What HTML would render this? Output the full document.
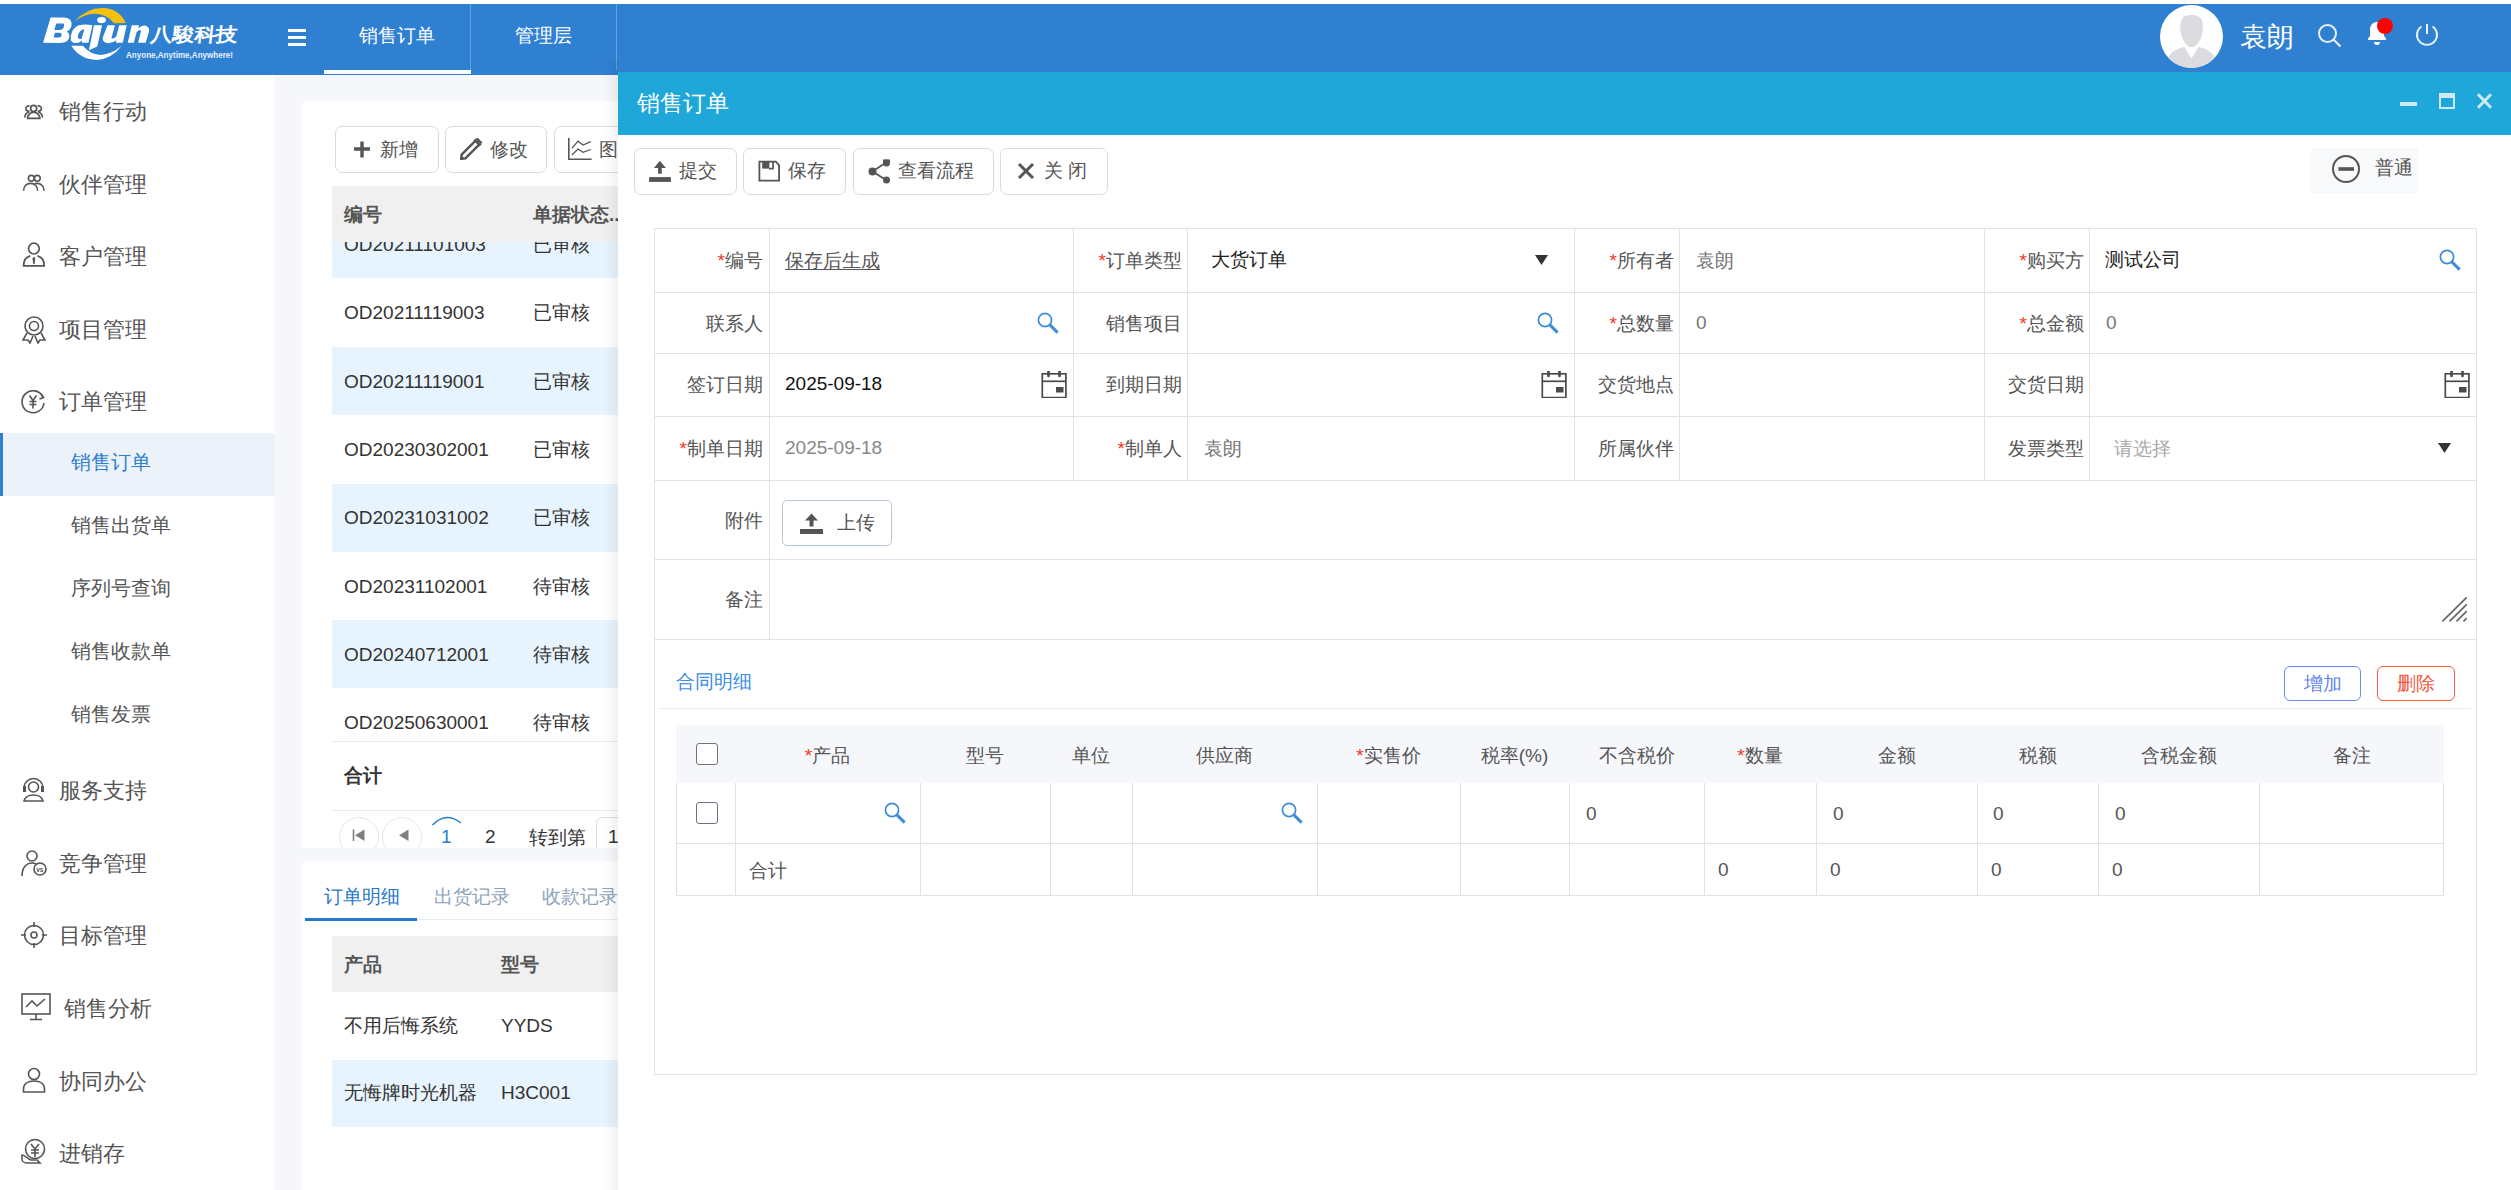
<!DOCTYPE html>
<html><head><meta charset="utf-8">
<style>
*{box-sizing:border-box;margin:0;padding:0}
html,body{width:2511px;height:1190px;overflow:hidden;background:#fff;font-family:"Liberation Sans",sans-serif;color:#333}
.t{position:absolute;white-space:nowrap}
.r{position:absolute}
</style></head><body>

<div class="r" style="left:275px;top:75px;width:2236px;height:1115px;background:#f5f7fb"></div>
<div class="r" style="left:301px;top:101px;width:2200px;height:747px;background:#fff;border-radius:6px 6px 0 0"></div>
<div class="r" style="left:301px;top:861px;width:2200px;height:400px;background:#fff;border-radius:6px"></div>
<div class="r" style="left:335px;top:126px;width:104px;height:47px;border:1px solid #dcdcdc;border-radius:7px;background:#fff"></div>
<div class="r" style="left:445px;top:126px;width:102px;height:47px;border:1px solid #dcdcdc;border-radius:7px;background:#fff"></div>
<div class="r" style="left:554px;top:126px;width:106px;height:47px;border:1px solid #dcdcdc;border-radius:7px;background:#fff"></div>
<svg class="r" style="left:353.5px;top:141px" width="16" height="17" viewBox="0 0 16 17"><path d="M8 0.5v16M0 8h16" stroke="#555" stroke-width="3.4" fill="none"/></svg>
<div class="t" style="left:380px;top:134.5px;font-size:19px;line-height:30px;color:#555;font-weight:normal;">新增</div>
<svg class="r" style="left:460px;top:138px" width="23" height="22" viewBox="0 0 23 22"><path d="M1.2 20.8 L1.6 16.6 L15.8 2.4 L19.6 6.2 L5.4 20.4 Z" fill="none" stroke="#555" stroke-width="2.4"/><path d="M0.5 21.5 L1 17 L5 21 Z" fill="#555"/><path d="M16 0.8 L17.5 -0.5 L22.5 4.5 L21 6 Z" fill="#555"/><path d="M14.5 1.5L20.5 7.5" stroke="#555" stroke-width="3"/></svg>
<div class="t" style="left:490px;top:134.5px;font-size:19px;line-height:30px;color:#555;font-weight:normal;">修改</div>
<svg class="r" style="left:568px;top:138px" width="24" height="23" viewBox="0 0 24 23"><path d="M0.8 0v21.2h22.8" stroke="#555" stroke-width="1.6" fill="none"/><path d="M3.9 10.4 L10 3.2 L15 7 L22.8 3.6 M3.9 17 L10 11 L15 14.3 L22.8 11.5" stroke="#555" stroke-width="1.3" fill="none"/></svg>
<div class="t" style="left:599px;top:134.5px;font-size:19px;line-height:30px;color:#555;font-weight:normal;">图表</div>
<div class="r" style="left:332px;top:186px;width:2100px;height:56px;background:#f0f0f0"></div>
<div class="r" style="left:332px;top:242px;width:2100px;height:499px;overflow:hidden">
<div class="r" style="left:0;top:-31.7px;width:2100px;height:68px;background:#e8f4fd"></div>
<div class="t" style="left:12px;top:-11.999999999999996px;font-size:19px;line-height:30px;color:#333">OD20211101003</div>
<div class="t" style="left:201px;top:-11.999999999999996px;font-size:19px;line-height:30px;color:#333">已审核</div>
<div class="r" style="left:0;top:36.6px;width:2100px;height:68px;background:#fff"></div>
<div class="t" style="left:12px;top:56.30000000000001px;font-size:19px;line-height:30px;color:#333">OD20211119003</div>
<div class="t" style="left:201px;top:56.30000000000001px;font-size:19px;line-height:30px;color:#333">已审核</div>
<div class="r" style="left:0;top:104.9px;width:2100px;height:68px;background:#e8f4fd"></div>
<div class="t" style="left:12px;top:124.60000000000002px;font-size:19px;line-height:30px;color:#333">OD20211119001</div>
<div class="t" style="left:201px;top:124.60000000000002px;font-size:19px;line-height:30px;color:#333">已审核</div>
<div class="r" style="left:0;top:173.2px;width:2100px;height:68px;background:#fff"></div>
<div class="t" style="left:12px;top:192.89999999999998px;font-size:19px;line-height:30px;color:#333">OD20230302001</div>
<div class="t" style="left:201px;top:192.89999999999998px;font-size:19px;line-height:30px;color:#333">已审核</div>
<div class="r" style="left:0;top:241.5px;width:2100px;height:68px;background:#e8f4fd"></div>
<div class="t" style="left:12px;top:261.2px;font-size:19px;line-height:30px;color:#333">OD20231031002</div>
<div class="t" style="left:201px;top:261.2px;font-size:19px;line-height:30px;color:#333">已审核</div>
<div class="r" style="left:0;top:309.8px;width:2100px;height:68px;background:#fff"></div>
<div class="t" style="left:12px;top:329.5px;font-size:19px;line-height:30px;color:#333">OD20231102001</div>
<div class="t" style="left:201px;top:329.5px;font-size:19px;line-height:30px;color:#333">待审核</div>
<div class="r" style="left:0;top:378.1px;width:2100px;height:68px;background:#e8f4fd"></div>
<div class="t" style="left:12px;top:397.8px;font-size:19px;line-height:30px;color:#333">OD20240712001</div>
<div class="t" style="left:201px;top:397.8px;font-size:19px;line-height:30px;color:#333">待审核</div>
<div class="r" style="left:0;top:446.4px;width:2100px;height:68px;background:#fff"></div>
<div class="t" style="left:12px;top:466.09999999999997px;font-size:19px;line-height:30px;color:#333">OD20250630001</div>
<div class="t" style="left:201px;top:466.09999999999997px;font-size:19px;line-height:30px;color:#333">待审核</div>
</div>
<div class="t" style="left:344px;top:200.0px;font-size:19px;line-height:30px;color:#555;font-weight:bold;">编号</div>
<div class="t" style="left:533px;top:200.0px;font-size:19px;line-height:30px;color:#555;font-weight:bold;">单据状态..</div>
<div class="r" style="left:332px;top:741px;width:2100px;height:1px;background:#e6ebf0"></div>
<div class="t" style="left:344px;top:761.0px;font-size:19px;line-height:30px;color:#333;font-weight:bold;">合计</div>
<div class="r" style="left:332px;top:810px;width:2100px;height:1px;background:#e6ebf0"></div>
<div class="r" style="left:301px;top:811px;width:400px;height:37px;overflow:hidden">
<div class="r" style="left:38px;top:6px;width:40px;height:40px;border:1px solid #e3e8f0;border-radius:50%"></div>
<div class="r" style="left:81px;top:6px;width:40px;height:40px;border:1px solid #e3e8f0;border-radius:50%"></div>
<svg class="r" style="left:51px;top:18px" width="14" height="14"><path d="M1.5 0.5v11.5" stroke="#808080" stroke-width="1.6"/><path d="M12.5 0.5v11.5L3 6.2z" fill="#808080"/></svg>
<svg class="r" style="left:97px;top:18px" width="14" height="14"><path d="M10.5 0.5v11.5L1 6.2z" fill="#808080"/></svg>
<svg class="r" style="left:130px;top:4px" width="32" height="12"><path d="M1.5 10 Q15 -4 30 8" stroke="#2a7fd0" stroke-width="1.5" fill="none"/></svg>
<div class="t" style="left:140px;top:11px;font-size:19px;line-height:30px;color:#2a7fd0">1</div>
<div class="t" style="left:184px;top:11px;font-size:19px;line-height:30px;color:#333">2</div>
<div class="t" style="left:228px;top:12px;font-size:19px;line-height:30px;color:#333">转到第</div>
<div class="r" style="left:295px;top:6px;width:60px;height:40px;border:1px solid #dcdcdc;border-radius:6px"></div>
<div class="t" style="left:307px;top:11px;font-size:19px;line-height:30px;color:#333">1</div>
</div>
<div class="t" style="left:324px;top:882.0px;font-size:19px;line-height:30px;color:#1f78c8;font-weight:normal;">订单明细</div>
<div class="t" style="left:434px;top:882.0px;font-size:19px;line-height:30px;color:#8ea3bb;font-weight:normal;">出货记录</div>
<div class="t" style="left:542px;top:882.0px;font-size:19px;line-height:30px;color:#8ea3bb;font-weight:normal;">收款记录</div>
<div class="r" style="left:305px;top:919px;width:2200px;height:1px;background:#e8edf3"></div>
<div class="r" style="left:305px;top:918px;width:112px;height:3px;background:#2477cc"></div>
<div class="r" style="left:332px;top:936px;width:2100px;height:56px;background:#f0f0f0"></div>
<div class="t" style="left:344px;top:950.0px;font-size:19px;line-height:30px;color:#555;font-weight:bold;">产品</div>
<div class="t" style="left:501px;top:950.0px;font-size:19px;line-height:30px;color:#555;font-weight:bold;">型号</div>
<div class="r" style="left:332px;top:1060px;width:2100px;height:67px;background:#e8f4fd"></div>
<div class="t" style="left:344px;top:1011.0px;font-size:19px;line-height:30px;color:#333;font-weight:normal;">不用后悔系统</div>
<div class="t" style="left:501px;top:1011.0px;font-size:19px;line-height:30px;color:#333;font-weight:normal;">YYDS</div>
<div class="t" style="left:344px;top:1078.0px;font-size:19px;line-height:30px;color:#333;font-weight:normal;">无悔牌时光机器</div>
<div class="t" style="left:501px;top:1078.0px;font-size:19px;line-height:30px;color:#333;font-weight:normal;">H3C001</div>
<div class="r" style="left:0px;top:75px;width:275px;height:1115px;background:#fff"></div>
<div class="r" style="left:0px;top:433px;width:275px;height:63px;background:#ecf2f9"></div>
<div class="r" style="left:0px;top:433px;width:3px;height:63px;background:#2f80d1"></div>
<div class="t" style="left:59px;top:93.5px;font-size:22px;line-height:35px;color:#555;font-weight:normal;">销售行动</div>
<div class="t" style="left:59px;top:167.0px;font-size:22px;line-height:35px;color:#555;font-weight:normal;">伙伴管理</div>
<div class="t" style="left:59px;top:239.0px;font-size:22px;line-height:35px;color:#555;font-weight:normal;">客户管理</div>
<div class="t" style="left:59px;top:312.0px;font-size:22px;line-height:35px;color:#555;font-weight:normal;">项目管理</div>
<div class="t" style="left:59px;top:384.0px;font-size:22px;line-height:35px;color:#555;font-weight:normal;">订单管理</div>
<div class="t" style="left:59px;top:772.5px;font-size:22px;line-height:35px;color:#555;font-weight:normal;">服务支持</div>
<div class="t" style="left:59px;top:845.5px;font-size:22px;line-height:35px;color:#555;font-weight:normal;">竞争管理</div>
<div class="t" style="left:59px;top:917.5px;font-size:22px;line-height:35px;color:#555;font-weight:normal;">目标管理</div>
<div class="t" style="left:63.5px;top:990.5px;font-size:22px;line-height:35px;color:#555;font-weight:normal;">销售分析</div>
<div class="t" style="left:59px;top:1063.5px;font-size:22px;line-height:35px;color:#555;font-weight:normal;">协同办公</div>
<div class="t" style="left:59px;top:1135.5px;font-size:22px;line-height:35px;color:#555;font-weight:normal;">进销存</div>
<div class="t" style="left:71px;top:446.0px;font-size:20px;line-height:32px;color:#2f7fd0;font-weight:normal;">销售订单</div>
<div class="t" style="left:71px;top:509.0px;font-size:20px;line-height:32px;color:#555;font-weight:normal;">销售出货单</div>
<div class="t" style="left:71px;top:572.0px;font-size:20px;line-height:32px;color:#555;font-weight:normal;">序列号查询</div>
<div class="t" style="left:71px;top:635.0px;font-size:20px;line-height:32px;color:#555;font-weight:normal;">销售收款单</div>
<div class="t" style="left:71px;top:698.0px;font-size:20px;line-height:32px;color:#555;font-weight:normal;">销售发票</div>
<svg class="r" style="left:22px;top:100px" width="24" height="22" viewBox="0 0 24 22"><g fill="none" stroke="#555" stroke-width="1.7"><circle cx="11.65" cy="8.4" r="3.05"/><path d="M5.6 18.35A6.1 6.1 0 0 1 17.8 18.35Z"/><path d="M7.55 6.2A2.6 2.6 0 1 0 7.4 11M2.8 17.5Q3.2 12.8 7.4 12"/><path d="M15.75 6.2A2.6 2.6 0 1 1 15.9 11M20.5 17.5Q20.1 12.8 15.9 12"/></g></svg>
<svg class="r" style="left:22px;top:173px" width="24" height="22" viewBox="0 0 24 22"><g fill="none" stroke="#555" stroke-width="1.6"><circle cx="9.3" cy="5.3" r="2.9"/><circle cx="15.3" cy="5.3" r="2.9"/><path d="M1.6 17.8C1.6 13 4.6 10.4 8.6 10.4S15.6 13 15.6 17.8"/><path d="M12.6 10.6C14 10.4 14.6 10.4 15 10.4C19 10.4 22 13 22 17.8"/></g></svg>
<svg class="r" style="left:21px;top:240px" width="26" height="30" viewBox="0 0 26 30"><g fill="none" stroke="#555" stroke-width="1.7"><circle cx="12.9" cy="8.6" r="5.4"/><path d="M9.3 15.9C5.3 17 2.6 20.3 2.6 25.8H23.2C23.2 20.3 20.5 17 16.5 15.9"/></g><path d="M12.9 16.8L11.5 18.2L12.1 23.6L12.9 24.6L13.7 23.6L14.3 18.2Z" fill="#555"/></svg>
<svg class="r" style="left:21px;top:316px" width="26" height="28" viewBox="0 0 26 28"><circle cx="13" cy="10" r="9" fill="none" stroke="#555" stroke-width="1.6"/><circle cx="13" cy="10" r="4.5" fill="none" stroke="#555" stroke-width="1.6"/><path d="M6 17L2 24l5 0 2 3 3-7M20 17l4 7h-5l-2 3-3-7" fill="none" stroke="#555" stroke-width="1.6"/></svg>
<svg class="r" style="left:21px;top:389px" width="25" height="25" viewBox="0 0 25 25"><path d="M22 8A11 11 0 1 0 23 14" fill="none" stroke="#555" stroke-width="1.6"/><path d="M20 5l2.5 3.5L18.5 10" fill="none" stroke="#555" stroke-width="1.6"/><path d="M8.5 6.5l3.5 5 3.5-5M12 11.5v8M8.5 12.5h7M8.5 15.5h7" fill="none" stroke="#555" stroke-width="1.6"/></svg>
<svg class="r" style="left:21px;top:776px" width="25" height="26" viewBox="0 0 25 26"><circle cx="12.5" cy="11" r="5" fill="none" stroke="#555" stroke-width="1.6"/><path d="M3 12A9.5 9.5 0 0 1 22 12" fill="none" stroke="#555" stroke-width="1.6"/><path d="M2 10h3v6H2zM20 10h3v6h-3z" fill="#555"/><path d="M3 25c1-4 4-6 9.5-6s8.5 2 9.5 6z" fill="none" stroke="#555" stroke-width="1.6"/></svg>
<svg class="r" style="left:21px;top:849px" width="26" height="28" viewBox="0 0 26 28"><circle cx="11" cy="7" r="5" fill="none" stroke="#555" stroke-width="1.6"/><path d="M1 27c0-8 4-13 10-13 1.5 0 3 .3 4 1" fill="none" stroke="#555" stroke-width="1.6"/><circle cx="19" cy="20" r="6" fill="none" stroke="#555" stroke-width="1.6"/><text x="15.2" y="22.5" font-size="6.5" font-family="Liberation Sans" font-weight="bold" fill="#555">vs</text></svg>
<svg class="r" style="left:21px;top:921px" width="26" height="28" viewBox="0 0 26 28"><circle cx="13" cy="14" r="9.5" fill="none" stroke="#555" stroke-width="1.6"/><circle cx="13" cy="14" r="3" fill="none" stroke="#555" stroke-width="1.6"/><path d="M13 1v5M13 22v5M0 14h5M21 14h5" fill="none" stroke="#555" stroke-width="1.6"/></svg>
<svg class="r" style="left:21px;top:993px" width="30" height="28" viewBox="0 0 30 28"><rect x="1" y="1" width="28" height="20" fill="none" stroke="#555" stroke-width="1.6"/><path d="M5 14l6-6 5 5 8-7" fill="none" stroke="#555" stroke-width="1.6"/><path d="M15 21v5M9 26.5h12" fill="none" stroke="#555" stroke-width="1.6"/></svg>
<svg class="r" style="left:22px;top:1067px" width="24" height="26" viewBox="0 0 24 26"><circle cx="12" cy="7" r="5.5" fill="none" stroke="#555" stroke-width="1.6"/><path d="M1.5 25v-3c0-5 4-8 10.5-8s10.5 3 10.5 8v3z" fill="none" stroke="#555" stroke-width="1.6"/></svg>
<svg class="r" style="left:21px;top:1138px" width="26" height="28" viewBox="0 0 26 28"><circle cx="14" cy="11" r="9.5" fill="none" stroke="#555" stroke-width="1.6"/><path d="M10 6l4 5 4-5M14 11v8M10 12h8M10 15h8" fill="none" stroke="#555" stroke-width="1.6"/><path d="M1 17c3 0 6 4 9 5h6l3 3H6c-3 0-5-2-5-4z" fill="none" stroke="#555" stroke-width="1.6"/></svg>
<div class="r" style="left:0px;top:4px;width:2511px;height:71px;background:#2f80d1"></div>
<div class="r" style="left:288px;top:29px;width:18px;height:2.5px;background:#fff"></div>
<div class="r" style="left:288px;top:36px;width:18px;height:2.5px;background:#fff"></div>
<div class="r" style="left:288px;top:43px;width:18px;height:2.5px;background:#fff"></div>
<div class="r" style="left:470px;top:4px;width:1px;height:66px;background:rgba(255,255,255,0.25)"></div>
<div class="r" style="left:616px;top:4px;width:1px;height:66px;background:rgba(255,255,255,0.25)"></div>
<div class="r" style="left:324px;top:70px;width:147px;height:4px;background:#fff"></div>
<div class="t" style="left:97px;width:600px;text-align:center;top:21.0px;font-size:19px;line-height:30px;color:#fff;font-weight:normal;">销售订单</div>
<div class="t" style="left:243px;width:600px;text-align:center;top:21.0px;font-size:19px;line-height:30px;color:#fff;font-weight:normal;">管理层</div>
<svg class="r" style="left:36px;top:4px" width="120" height="60" viewBox="0 0 2380 1190"><path fill="#f7c00e" d="M760 350 Q1000 80 1320 80 Q1650 90 1780 375 L1550 380 Q1400 200 1180 195 Q950 200 760 350 Z"/><path fill="#fff" d="M700 830 L930 830 Q1080 1010 1290 1010 Q1500 1000 1700 830 Q1500 1100 1200 1110 Q870 1100 700 830 Z"/><path fill="#fff" fill-rule="evenodd" d="M140 770 L290 270 L560 270 Q720 280 705 420 Q690 510 610 545 Q675 585 660 665 Q635 770 480 775 Z M400 385 L545 385 Q565 400 555 445 Q535 510 470 515 L365 515 Z M350 665 L460 665 Q505 660 510 610 Q510 570 465 570 L375 570 Z"/><path fill="#fff" fill-rule="evenodd" d="M690 700 Q680 480 850 420 Q980 395 1120 420 L1040 770 L910 770 L915 725 Q860 780 770 775 Q690 760 690 700 Z M830 650 Q840 520 960 500 L905 690 Q830 705 830 650 Z"/><path fill="#fff" d="M1150 420 L1310 420 L1215 845 L1050 915 Z"/><ellipse fill="#fff" cx="1300" cy="318" rx="88" ry="62"/><path fill="#fff" d="M1420 420 L1565 420 L1495 680 Q1540 700 1595 640 L1650 420 L1800 420 L1720 770 L1585 770 L1595 720 Q1510 790 1400 775 Q1300 745 1330 650 Z"/><path fill="#fff" d="M1820 770 L1900 420 L2040 420 L2030 480 Q2120 400 2200 440 Q2265 480 2235 565 L2175 770 L2025 770 L2085 525 Q2045 500 1995 560 L1940 770 Z"/></svg>
<svg class="r" style="left:120px;top:14px" width="125" height="50"><text x="33" y="27" textLength="87" lengthAdjust="spacingAndGlyphs" transform="skewX(-6)" font-family="Liberation Sans" font-weight="bold" font-size="19" fill="#fff">八駿科技</text><text x="6" y="43.5" textLength="107" lengthAdjust="spacingAndGlyphs" font-family="Liberation Sans" font-weight="bold" font-size="8.8" fill="#e6f0fb">Anyone,Anytime,Anywhere!</text></svg>
<div class="r" style="left:2160px;top:5px;width:63px;height:63px;border-radius:50%;background:#fff;overflow:hidden">
<svg class="r" style="left:0;top:0" width="63" height="63"><path d="M31.5 10.1C37.5 10.1 42.9 11.5 42.9 22C42.9 33 37 42.3 31.5 42.3C26 42.3 20.2 33 20.2 22C20.2 11.5 25.5 10.1 31.5 10.1Z" fill="#dcdce0"/><path d="M24.3 41.7L31.5 53.5L38.7 41.7C44 43.5 50 45 54 51L54 63L9 63L9 51C13 45 19 43.5 24.3 41.7Z" fill="#dcdce0"/></svg>
</div>
<div class="t" style="left:2240px;top:15.5px;font-size:27px;line-height:43px;color:#fff;font-weight:normal;">袁朗</div>
<svg class="r" style="left:2317px;top:23px" width="26" height="26" viewBox="0 0 26 26"><circle cx="10.5" cy="10.5" r="8.5" fill="none" stroke="#e8eff9" stroke-width="2"/><path d="M16.5 16.5l7 7" stroke="#e8eff9" stroke-width="2.2"/></svg>
<svg class="r" style="left:2365px;top:17.5px" width="26" height="28" viewBox="0 0 26 28"><path d="M12 4c-5 0-7 4-7 8v6l-2 2.5v1.5h18v-1.5l-2-2.5v-6c0-4-2-8-7-8z" fill="#fff"/><path d="M9 24a3 3 0 0 0 6 0z" fill="#fff"/></svg>
<svg class="r" style="left:2375px;top:16px" width="20" height="20" viewBox="0 0 20 20"><circle cx="10" cy="10" r="8" fill="#f00"/></svg>
<svg class="r" style="left:2414px;top:22px" width="26" height="26" viewBox="0 0 26 26"><path d="M7.5 4.5A10 10 0 1 0 18.5 4.5" fill="none" stroke="#e8eff9" stroke-width="2"/><path d="M13 2v10" stroke="#e8eff9" stroke-width="2"/></svg>
<div class="r" style="left:604px;top:60px;width:14px;height:1130px;background:linear-gradient(to right, rgba(0,0,0,0), rgba(0,0,0,0.055))"></div>
<div class="r" style="left:618px;top:72px;width:1893px;height:1118px;background:#fff"></div>
<div class="r" style="left:618px;top:72px;width:1893px;height:63px;background:#20a7d9"></div>
<div class="t" style="left:637px;top:84.5px;font-size:23px;line-height:36px;color:#fff;font-weight:normal;">销售订单</div>
<div class="r" style="left:2400px;top:102px;width:17px;height:4px;background:#cde9f5"></div>
<div class="r" style="left:2439px;top:93px;width:16px;height:16px;border:2px solid #cde9f5;border-top-width:5px"></div>
<svg class="r" style="left:2476px;top:92px" width="17" height="18" viewBox="0 0 17 18"><path d="M2 2.2l13 13.6M15 2.2l-13 13.6" stroke="#cde9f5" stroke-width="3"/></svg>
<div class="r" style="left:634px;top:148px;width:103px;height:47px;border:1px solid #dcdcdc;border-radius:7px;background:#fff"></div>
<div class="r" style="left:743px;top:148px;width:103px;height:47px;border:1px solid #dcdcdc;border-radius:7px;background:#fff"></div>
<div class="r" style="left:853px;top:148px;width:141px;height:47px;border:1px solid #dcdcdc;border-radius:7px;background:#fff"></div>
<div class="r" style="left:1000px;top:148px;width:108px;height:47px;border:1px solid #dcdcdc;border-radius:7px;background:#fff"></div>
<svg class="r" style="left:648px;top:160px" width="23" height="23" viewBox="0 0 23 23"><path d="M11.8 0.8L6 8H10.1V13.8H13.7V8H17.9Z" fill="#555"/><rect x="1.1" y="17.1" width="21.8" height="4.8" fill="#555"/></svg>
<div class="t" style="left:679px;top:156.0px;font-size:19px;line-height:30px;color:#555;font-weight:normal;">提交</div>
<svg class="r" style="left:758px;top:160px" width="23" height="23" viewBox="0 0 23 23"><path d="M1.4 1.7h16.4l3.3 3.6v15.4H1.4z" fill="none" stroke="#555" stroke-width="1.8"/><rect x="4.2" y="1.5" width="7.2" height="7.1" fill="#555"/><path d="M15 1.5v7.1H11" fill="none" stroke="#555" stroke-width="1.7"/></svg>
<div class="t" style="left:788px;top:156.0px;font-size:19px;line-height:30px;color:#555;font-weight:normal;">保存</div>
<svg class="r" style="left:867.5px;top:159px" width="23" height="25" viewBox="0 0 23 25"><circle cx="4.5" cy="12.5" r="4" fill="#555"/><circle cx="18.5" cy="4" r="3.5" fill="#555"/><circle cx="18.5" cy="21" r="3.5" fill="#555"/><path d="M4.5 12.5L18 3.5M4.5 12.5L18 21" stroke="#555" stroke-width="1.8"/><rect x="15" y="0.5" width="7" height="3" fill="#555"/></svg>
<div class="t" style="left:898px;top:156.0px;font-size:19px;line-height:30px;color:#555;font-weight:normal;">查看流程</div>
<svg class="r" style="left:1017px;top:162px" width="18" height="18" viewBox="0 0 18 18"><path d="M2 2l14 14M16 2L2 16" stroke="#555" stroke-width="3"/></svg>
<div class="t" style="left:1044px;top:156.0px;font-size:19px;line-height:30px;color:#555;font-weight:normal;">关 闭</div>
<div class="r" style="left:2311px;top:148px;width:107px;height:45px;background:#f8f9fb"></div>
<svg class="r" style="left:2331px;top:154px" width="30" height="30" viewBox="0 0 30 30"><circle cx="15" cy="15" r="13" fill="none" stroke="#555" stroke-width="2"/><rect x="7.5" y="13.2" width="15.5" height="3.6" fill="#555"/></svg>
<div class="t" style="left:2375px;top:153.0px;font-size:19px;line-height:30px;color:#555;font-weight:normal;">普通</div>
<div class="r" style="left:654px;top:228px;width:1823px;height:847px;border:1px solid #e2e2e2"></div>
<div class="r" style="left:654px;top:292px;width:1823px;height:1px;background:#e2e2e2"></div>
<div class="r" style="left:654px;top:353px;width:1823px;height:1px;background:#e2e2e2"></div>
<div class="r" style="left:654px;top:416px;width:1823px;height:1px;background:#e2e2e2"></div>
<div class="r" style="left:654px;top:480px;width:1823px;height:1px;background:#e2e2e2"></div>
<div class="r" style="left:654px;top:559px;width:1823px;height:1px;background:#e2e2e2"></div>
<div class="r" style="left:654px;top:639px;width:1823px;height:1px;background:#e2e2e2"></div>
<div class="r" style="left:769px;top:228px;width:1px;height:411px;background:#e2e2e2"></div>
<div class="r" style="left:1073px;top:228px;width:1px;height:252px;background:#e2e2e2"></div>
<div class="r" style="left:1187px;top:228px;width:1px;height:252px;background:#e2e2e2"></div>
<div class="r" style="left:1574px;top:228px;width:1px;height:252px;background:#e2e2e2"></div>
<div class="r" style="left:1679px;top:228px;width:1px;height:252px;background:#e2e2e2"></div>
<div class="r" style="left:1984px;top:228px;width:1px;height:252px;background:#e2e2e2"></div>
<div class="r" style="left:2089px;top:228px;width:1px;height:252px;background:#e2e2e2"></div>
<div class="t" style="left:363px;width:400px;text-align:right;top:246.0px;font-size:19px;line-height:30px;color:#555;font-weight:normal;"><span style="color:#f2381f">*</span>编号</div>
<div class="t" style="left:782px;width:400px;text-align:right;top:246.0px;font-size:19px;line-height:30px;color:#555;font-weight:normal;"><span style="color:#f2381f">*</span>订单类型</div>
<div class="t" style="left:1274px;width:400px;text-align:right;top:246.0px;font-size:19px;line-height:30px;color:#555;font-weight:normal;"><span style="color:#f2381f">*</span>所有者</div>
<div class="t" style="left:1684px;width:400px;text-align:right;top:246.0px;font-size:19px;line-height:30px;color:#555;font-weight:normal;"><span style="color:#f2381f">*</span>购买方</div>
<div class="t" style="left:363px;width:400px;text-align:right;top:309.0px;font-size:19px;line-height:30px;color:#555;font-weight:normal;">联系人</div>
<div class="t" style="left:782px;width:400px;text-align:right;top:309.0px;font-size:19px;line-height:30px;color:#555;font-weight:normal;">销售项目</div>
<div class="t" style="left:1274px;width:400px;text-align:right;top:309.0px;font-size:19px;line-height:30px;color:#555;font-weight:normal;"><span style="color:#f2381f">*</span>总数量</div>
<div class="t" style="left:1684px;width:400px;text-align:right;top:309.0px;font-size:19px;line-height:30px;color:#555;font-weight:normal;"><span style="color:#f2381f">*</span>总金额</div>
<div class="t" style="left:363px;width:400px;text-align:right;top:370.0px;font-size:19px;line-height:30px;color:#555;font-weight:normal;">签订日期</div>
<div class="t" style="left:782px;width:400px;text-align:right;top:370.0px;font-size:19px;line-height:30px;color:#555;font-weight:normal;">到期日期</div>
<div class="t" style="left:1274px;width:400px;text-align:right;top:370.0px;font-size:19px;line-height:30px;color:#555;font-weight:normal;">交货地点</div>
<div class="t" style="left:1684px;width:400px;text-align:right;top:370.0px;font-size:19px;line-height:30px;color:#555;font-weight:normal;">交货日期</div>
<div class="t" style="left:363px;width:400px;text-align:right;top:433.5px;font-size:19px;line-height:30px;color:#555;font-weight:normal;"><span style="color:#f2381f">*</span>制单日期</div>
<div class="t" style="left:782px;width:400px;text-align:right;top:433.5px;font-size:19px;line-height:30px;color:#555;font-weight:normal;"><span style="color:#f2381f">*</span>制单人</div>
<div class="t" style="left:1274px;width:400px;text-align:right;top:433.5px;font-size:19px;line-height:30px;color:#555;font-weight:normal;">所属伙伴</div>
<div class="t" style="left:1684px;width:400px;text-align:right;top:433.5px;font-size:19px;line-height:30px;color:#555;font-weight:normal;">发票类型</div>
<div class="t" style="left:363px;width:400px;text-align:right;top:505.5px;font-size:19px;line-height:30px;color:#555;font-weight:normal;">附件</div>
<div class="t" style="left:363px;width:400px;text-align:right;top:585.0px;font-size:19px;line-height:30px;color:#555;font-weight:normal;">备注</div>
<div class="t" style="left:785px;top:246.0px;font-size:19px;line-height:30px;color:#555;font-weight:normal;text-decoration:underline;text-underline-offset:2px">保存后生成</div>
<div class="t" style="left:1211px;top:245.0px;font-size:19px;line-height:30px;color:#222;font-weight:normal;">大货订单</div>
<div class="t" style="left:1696px;top:246.0px;font-size:19px;line-height:30px;color:#777;font-weight:normal;">袁朗</div>
<div class="t" style="left:2105px;top:245.0px;font-size:19px;line-height:30px;color:#222;font-weight:normal;">测试公司</div>
<div class="t" style="left:1696px;top:308.0px;font-size:19px;line-height:30px;color:#777;font-weight:normal;">0</div>
<div class="t" style="left:2106px;top:308.0px;font-size:19px;line-height:30px;color:#777;font-weight:normal;">0</div>
<div class="t" style="left:785px;top:369.0px;font-size:19px;line-height:30px;color:#111;font-weight:normal;">2025-09-18</div>
<div class="t" style="left:785px;top:433.0px;font-size:19px;line-height:30px;color:#888;font-weight:normal;">2025-09-18</div>
<div class="t" style="left:1204px;top:433.5px;font-size:19px;line-height:30px;color:#777;font-weight:normal;">袁朗</div>
<div class="t" style="left:2114px;top:433.5px;font-size:19px;line-height:30px;color:#aaa;font-weight:normal;">请选择</div>
<svg class="r" style="left:1535px;top:255px" width="13" height="10" viewBox="0 0 13 10"><path d="M0 0h13L6.5 10z" fill="#333"/></svg>
<svg class="r" style="left:2438px;top:443px" width="13" height="10" viewBox="0 0 13 10"><path d="M0 0h13L6.5 10z" fill="#333"/></svg>
<svg class="r" style="left:1037px;top:312px" width="23" height="23" viewBox="0 0 23 23"><circle cx="8" cy="8" r="6.6" fill="none" stroke="#3d8cdb" stroke-width="1.7"/><path d="M12.4 12.4l8.2 8.2" stroke="#3d8cdb" stroke-width="3"/></svg>
<svg class="r" style="left:1537px;top:312px" width="23" height="23" viewBox="0 0 23 23"><circle cx="8" cy="8" r="6.6" fill="none" stroke="#3d8cdb" stroke-width="1.7"/><path d="M12.4 12.4l8.2 8.2" stroke="#3d8cdb" stroke-width="3"/></svg>
<svg class="r" style="left:2439px;top:249px" width="23" height="23" viewBox="0 0 23 23"><circle cx="8" cy="8" r="6.6" fill="none" stroke="#3d8cdb" stroke-width="1.7"/><path d="M12.4 12.4l8.2 8.2" stroke="#3d8cdb" stroke-width="3"/></svg>
<svg class="r" style="left:1041px;top:371px" width="26" height="27" viewBox="0 0 26 27"><rect x="1.3" y="2.8" width="23.6" height="23.8" fill="none" stroke="#4a4a4a" stroke-width="1.7"/><path d="M1.3 10.3h23.6" stroke="#4a4a4a" stroke-width="1.7"/><path d="M7.5 0.5v4.5M18.5 0.5v4.5" stroke="#4a4a4a" stroke-width="2.6" stroke-linecap="round"/><rect x="15" y="16" width="7.5" height="5.5" fill="#4a4a4a"/></svg>
<svg class="r" style="left:1541px;top:371px" width="26" height="27" viewBox="0 0 26 27"><rect x="1.3" y="2.8" width="23.6" height="23.8" fill="none" stroke="#4a4a4a" stroke-width="1.7"/><path d="M1.3 10.3h23.6" stroke="#4a4a4a" stroke-width="1.7"/><path d="M7.5 0.5v4.5M18.5 0.5v4.5" stroke="#4a4a4a" stroke-width="2.6" stroke-linecap="round"/><rect x="15" y="16" width="7.5" height="5.5" fill="#4a4a4a"/></svg>
<svg class="r" style="left:2444px;top:371px" width="26" height="27" viewBox="0 0 26 27"><rect x="1.3" y="2.8" width="23.6" height="23.8" fill="none" stroke="#4a4a4a" stroke-width="1.7"/><path d="M1.3 10.3h23.6" stroke="#4a4a4a" stroke-width="1.7"/><path d="M7.5 0.5v4.5M18.5 0.5v4.5" stroke="#4a4a4a" stroke-width="2.6" stroke-linecap="round"/><rect x="15" y="16" width="7.5" height="5.5" fill="#4a4a4a"/></svg>
<div class="r" style="left:782px;top:500px;width:110px;height:46px;border:1px solid #b9c7d9;border-radius:5px;background:#fff"></div>
<svg class="r" style="left:800px;top:513px" width="23" height="21" viewBox="0 0 23 21"><path d="M11.5 0.5L5 7.5h4.5v6h4v-6H18z" fill="#555"/><rect x="0" y="16" width="23" height="5" fill="#555"/></svg>
<div class="t" style="left:837px;top:508.0px;font-size:19px;line-height:30px;color:#555;font-weight:normal;">上传</div>
<svg class="r" style="left:2440px;top:595px" width="28" height="28" viewBox="0 0 28 28"><path d="M2.9 25.9L26.2 2.9M10 25.9L26.2 9.8M17 25.9L26.2 16.6M24 25.9L26.2 23.6" stroke="#6a6a6a" stroke-width="1.8" stroke-linecap="round"/></svg>
<div class="t" style="left:676px;top:667.0px;font-size:19px;line-height:30px;color:#3a8ee6;font-weight:normal;">合同明细</div>
<div class="r" style="left:2284px;top:666px;width:77px;height:35px;border:1px solid #6a8ef2;border-radius:6px"></div>
<div class="t" style="left:2022.5px;width:600px;text-align:center;top:669.0px;font-size:19px;line-height:30px;color:#5f86ee;font-weight:normal;">增加</div>
<div class="r" style="left:2377px;top:666px;width:78px;height:35px;border:1px solid #f45a3b;border-radius:6px"></div>
<div class="t" style="left:2116px;width:600px;text-align:center;top:669.0px;font-size:19px;line-height:30px;color:#f4553a;font-weight:normal;">删除</div>
<div class="r" style="left:659px;top:708px;width:1812px;height:1px;background:#e9edf3"></div>
<div class="r" style="left:676px;top:725px;width:1768px;height:58px;background:#f5f7fb"></div>
<div class="r" style="left:676px;top:783px;width:1768px;height:113px;border:1px solid #e2e2e2;border-top:none"></div>
<div class="r" style="left:676px;top:843px;width:1768px;height:1px;background:#e2e2e2"></div>
<div class="r" style="left:735px;top:783px;width:1px;height:113px;background:#e2e2e2"></div>
<div class="r" style="left:920px;top:783px;width:1px;height:113px;background:#e2e2e2"></div>
<div class="r" style="left:1050px;top:783px;width:1px;height:113px;background:#e2e2e2"></div>
<div class="r" style="left:1132px;top:783px;width:1px;height:113px;background:#e2e2e2"></div>
<div class="r" style="left:1317px;top:783px;width:1px;height:113px;background:#e2e2e2"></div>
<div class="r" style="left:1460px;top:783px;width:1px;height:113px;background:#e2e2e2"></div>
<div class="r" style="left:1569px;top:783px;width:1px;height:113px;background:#e2e2e2"></div>
<div class="r" style="left:1704px;top:783px;width:1px;height:113px;background:#e2e2e2"></div>
<div class="r" style="left:1816px;top:783px;width:1px;height:113px;background:#e2e2e2"></div>
<div class="r" style="left:1977px;top:783px;width:1px;height:113px;background:#e2e2e2"></div>
<div class="r" style="left:2098px;top:783px;width:1px;height:113px;background:#e2e2e2"></div>
<div class="r" style="left:2259px;top:783px;width:1px;height:113px;background:#e2e2e2"></div>
<div class="t" style="left:527.5px;width:600px;text-align:center;top:740.5px;font-size:19px;line-height:30px;color:#555;font-weight:normal;"><span style="color:#f2381f">*</span>产品</div>
<div class="t" style="left:685.0px;width:600px;text-align:center;top:740.5px;font-size:19px;line-height:30px;color:#555;font-weight:normal;">型号</div>
<div class="t" style="left:791.0px;width:600px;text-align:center;top:740.5px;font-size:19px;line-height:30px;color:#555;font-weight:normal;">单位</div>
<div class="t" style="left:924.5px;width:600px;text-align:center;top:740.5px;font-size:19px;line-height:30px;color:#555;font-weight:normal;">供应商</div>
<div class="t" style="left:1088.5px;width:600px;text-align:center;top:740.5px;font-size:19px;line-height:30px;color:#555;font-weight:normal;"><span style="color:#f2381f">*</span>实售价</div>
<div class="t" style="left:1214.5px;width:600px;text-align:center;top:740.5px;font-size:19px;line-height:30px;color:#555;font-weight:normal;">税率(%)</div>
<div class="t" style="left:1336.5px;width:600px;text-align:center;top:740.5px;font-size:19px;line-height:30px;color:#555;font-weight:normal;">不含税价</div>
<div class="t" style="left:1460.0px;width:600px;text-align:center;top:740.5px;font-size:19px;line-height:30px;color:#555;font-weight:normal;"><span style="color:#f2381f">*</span>数量</div>
<div class="t" style="left:1596.5px;width:600px;text-align:center;top:740.5px;font-size:19px;line-height:30px;color:#555;font-weight:normal;">金额</div>
<div class="t" style="left:1737.5px;width:600px;text-align:center;top:740.5px;font-size:19px;line-height:30px;color:#555;font-weight:normal;">税额</div>
<div class="t" style="left:1878.5px;width:600px;text-align:center;top:740.5px;font-size:19px;line-height:30px;color:#555;font-weight:normal;">含税金额</div>
<div class="t" style="left:2051.5px;width:600px;text-align:center;top:740.5px;font-size:19px;line-height:30px;color:#555;font-weight:normal;">备注</div>
<div class="r" style="left:696px;top:743px;width:22px;height:22px;border:1px solid #6f7280;border-radius:3px;background:#fff"></div>
<div class="r" style="left:696px;top:802px;width:22px;height:22px;border:1px solid #6f7280;border-radius:3px;background:#fff"></div>
<svg class="r" style="left:884px;top:802px" width="23" height="23" viewBox="0 0 23 23"><circle cx="8" cy="8" r="6.6" fill="none" stroke="#3d8cdb" stroke-width="1.7"/><path d="M12.4 12.4l8.2 8.2" stroke="#3d8cdb" stroke-width="3"/></svg>
<svg class="r" style="left:1281px;top:802px" width="23" height="23" viewBox="0 0 23 23"><circle cx="8" cy="8" r="6.6" fill="none" stroke="#3d8cdb" stroke-width="1.7"/><path d="M12.4 12.4l8.2 8.2" stroke="#3d8cdb" stroke-width="3"/></svg>
<div class="t" style="left:1586px;top:798.5px;font-size:19px;line-height:30px;color:#555;font-weight:normal;">0</div>
<div class="t" style="left:1833px;top:798.5px;font-size:19px;line-height:30px;color:#555;font-weight:normal;">0</div>
<div class="t" style="left:1993px;top:798.5px;font-size:19px;line-height:30px;color:#555;font-weight:normal;">0</div>
<div class="t" style="left:2115px;top:798.5px;font-size:19px;line-height:30px;color:#555;font-weight:normal;">0</div>
<div class="t" style="left:749px;top:856.0px;font-size:19px;line-height:30px;color:#555;font-weight:normal;">合计</div>
<div class="t" style="left:1718px;top:854.5px;font-size:19px;line-height:30px;color:#555;font-weight:normal;">0</div>
<div class="t" style="left:1830px;top:854.5px;font-size:19px;line-height:30px;color:#555;font-weight:normal;">0</div>
<div class="t" style="left:1991px;top:854.5px;font-size:19px;line-height:30px;color:#555;font-weight:normal;">0</div>
<div class="t" style="left:2112px;top:854.5px;font-size:19px;line-height:30px;color:#555;font-weight:normal;">0</div>
</body></html>
